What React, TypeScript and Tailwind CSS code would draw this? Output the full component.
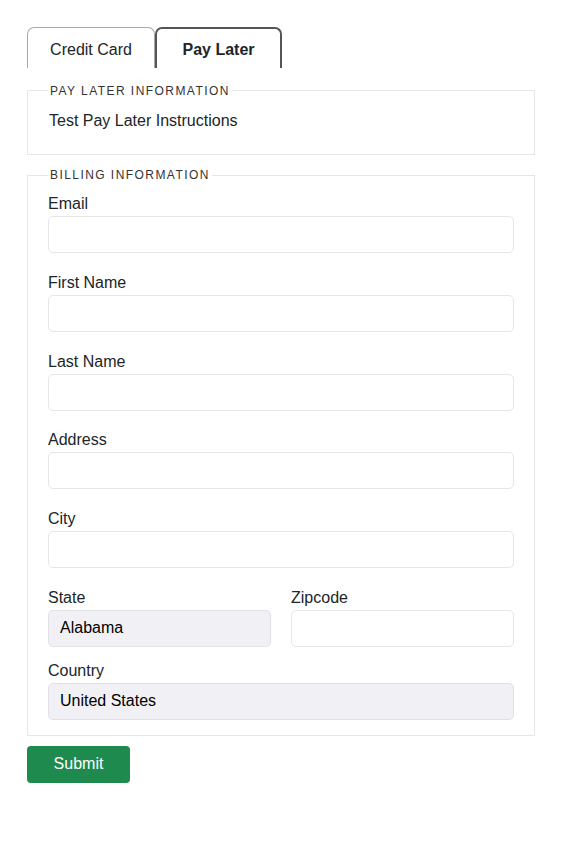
import { useState } from "react";

type Field = { label: string; value?: string; disabled?: boolean };

const fields: Field[] = [
    { label: "Email" },
    { label: "First Name" },
    { label: "Last Name" },
    { label: "Address" },
    { label: "City" },
];

function TextInput({ value, disabled }: { value?: string; disabled?: boolean }) {
    return (
        <input
            type="text"
            defaultValue={value}
            disabled={disabled}
            className={
                "block w-full h-[37px] rounded-[5px] border px-[11px] text-[16px] text-black outline-none " +
                (disabled ? "bg-[#f1f1f5] border-[#e0e0e6]" : "bg-white border-[#e6e6e6]")
            }
        />
    );
}

export default function App() {
    const [tab, setTab] = useState<"card" | "later">("later");

    return (
        <div className="w-full min-h-[843px] bg-white px-[27px] pt-[27px] text-[#212529]" style={{ fontFamily: '"Liberation Sans", Arial, sans-serif' }}>
            <div className="w-[508px]">
                <div className="flex h-[41px]">
                    <button
                        onClick={() => setTab("card")}
                        className={
                            "w-[128px] h-full pt-[3px] rounded-t-[7px] text-[16px] " +
                            (tab === "card" ? "border-2 border-b-0 border-[#555] font-bold" : "border border-b-0 border-[#a8a8a8] font-normal")
                        }
                    >
                        Credit Card
                    </button>
                    <button
                        onClick={() => setTab("later")}
                        className={
                            "w-[127px] h-full pt-[2px] rounded-t-[7px] text-[16px] " +
                            (tab === "later" ? "border-2 border-b-0 border-[#555] font-bold" : "border border-b-0 border-[#a8a8a8] font-normal")
                        }
                    >
                        Pay Later
                    </button>
                </div>

                <fieldset className="mt-[14px] border border-[#e6e6e6] px-[21px] pb-[21px]">
                    <legend className="px-[2px] -ml-[1px] pt-[1px] text-[12px] leading-[16px] tracking-[0.12em] text-[#333]">PAY LATER INFORMATION</legend>
                    <p className="mt-[10px] text-[16px] leading-[24px]">Test Pay Later Instructions</p>
                </fieldset>

                <fieldset className="mt-[12px] border border-[#e6e6e6] px-[20px] pb-[15px]">
                    <legend className="px-[2px] text-[12px] leading-[16px] tracking-[0.12em] text-[#333]">BILLING INFORMATION</legend>
                    <div className="mt-[9px] flex flex-col gap-[17.75px]">
                        {fields.map((f) => (
                            <div key={f.label}>
                                <label className="block text-[16px] leading-[24px]">{f.label}</label>
                                <TextInput />
                            </div>
                        ))}
                    </div>
                    <div className="mt-[17.75px] grid grid-cols-2 gap-x-[20px]">
                        <div>
                            <label className="block text-[16px] leading-[24px]">State</label>
                            <TextInput value="Alabama" disabled />
                        </div>
                        <div>
                            <label className="block text-[16px] leading-[24px]">Zipcode</label>
                            <TextInput />
                        </div>
                    </div>
                    <div className="mt-[12px]">
                        <label className="block text-[16px] leading-[24px]">Country</label>
                        <TextInput value="United States" disabled />
                    </div>
                </fieldset>

                <button className="mt-[10px] h-[37px] w-[103px] rounded-[4px] bg-[#1e8a4e] text-[16px] text-white">Submit</button>
            </div>
        </div>
    );
}
